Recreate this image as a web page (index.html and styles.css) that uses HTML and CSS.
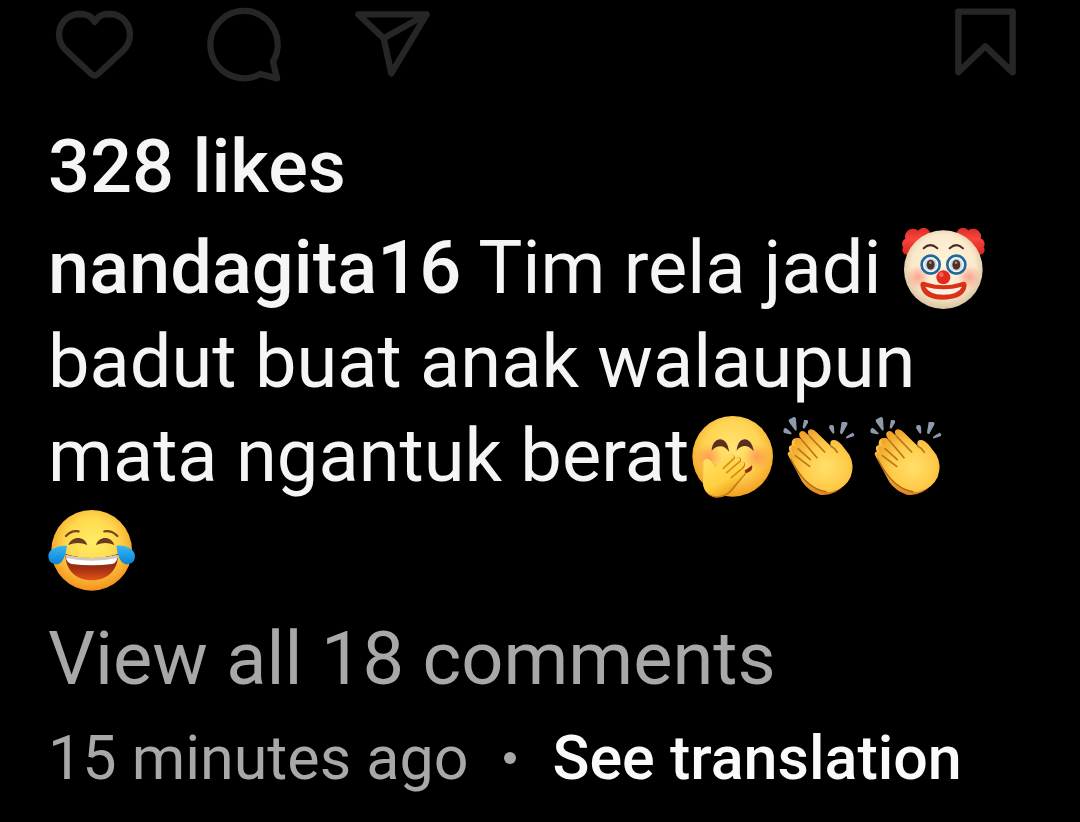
FILE: index.html
```html
<!DOCTYPE html>
<html lang="id">
<head>
<meta charset="utf-8">
<meta name="viewport" content="width=device-width, initial-scale=1">
<title>nandagita16</title>
<link rel="stylesheet" href="styles.css">
</head>
<body>
<article class="post">
  <div class="actions">
    <button class="action" type="button" aria-label="Like">
      <svg class="action-icon" viewBox="24 0 276 264"><path d="M164 66 C150 42 134 42 116 42 C84 43 57 70 57 104 C57 126 68 142 82 155 L154 222 Q164 231 174 222 L246 155 C260 142 270 126 270 104 C270 70 244 43 212 42 C194 42 178 42 164 66 Z"/></svg>
    </button>
    <button class="action" type="button" aria-label="Comment">
      <svg class="action-icon" viewBox="474 0 276 264"><path d="M661 222 A101 101 0 1 1 699 185 L711 235 Z"/></svg>
    </button>
    <button class="action" type="button" aria-label="Share">
      <svg class="action-icon" viewBox="924 0 276 264"><path d="M955 43 H1160 L1054 220 L1031 115 Z M1031 115 L1160 43"/></svg>
    </button>
    <button class="action action-save" type="button" aria-label="Save">
      <svg class="action-icon" viewBox="0 0 276 264"><path d="M55 35 H218 V217 L136 139 L55 217 Z"/></svg>
    </button>
  </div>

  <p class="likes">328 likes</p>

  <p class="caption"><a class="author" href="#">nandagita16</a> Tim rela jadi <svg class="emoji" role="img" aria-label="Clown face" viewBox="27 27 261 264">
      <defs>
        <radialGradient id="clown-skin" cx=".5" cy=".45" r=".55"><stop offset="0" stop-color="#fff5dc"/><stop offset=".72" stop-color="#fbe9cc"/><stop offset="1" stop-color="#d9c4a0"/></radialGradient>
        <linearGradient id="clown-hair" gradientUnits="userSpaceOnUse" x1="0" y1="35" x2="0" y2="118"><stop offset="0" stop-color="#d92a22"/><stop offset=".4" stop-color="#f8463c"/><stop offset="1" stop-color="#d9231d"/></linearGradient>
        <radialGradient id="clown-blush"><stop offset="0" stop-color="#ff8b78" stop-opacity=".75"/><stop offset="1" stop-color="#ff8b78" stop-opacity="0"/></radialGradient>
      </defs>
      <g fill="url(#clown-hair)"><circle cx="66" cy="62" r="24"/><circle cx="51" cy="84" r="18"/><circle cx="48" cy="102" r="14"/><circle cx="98" cy="54" r="19"/><circle cx="246" cy="62" r="24"/><circle cx="263" cy="84" r="18"/><circle cx="267" cy="102" r="14"/><circle cx="216" cy="54" r="19"/></g>
      <circle cx="157" cy="161" r="118" fill="url(#clown-skin)"/>
      <circle cx="80" cy="184" r="36" fill="url(#clown-blush)"/><circle cx="235" cy="184" r="36" fill="url(#clown-blush)"/>
      <path d="M98 97 Q118 78 139 97 M176 97 Q197 78 216 97" fill="none" stroke="#4c2b20" stroke-width="6" stroke-linecap="round"/>
      <g fill="#fff" stroke="#21699c" stroke-width="8"><circle cx="119" cy="146" r="27"/><circle cx="196" cy="146" r="27"/></g>
      <g fill="#c8dce7"><circle cx="119" cy="146" r="19"/><circle cx="196" cy="146" r="19"/></g>
      <g fill="#533025"><ellipse cx="119" cy="146" rx="12" ry="15"/><ellipse cx="196" cy="146" rx="12" ry="15"/></g>
      <g fill="#a98a80"><circle cx="118" cy="140" r="4"/><circle cx="195" cy="140" r="4"/></g>
      <path d="M88 206 Q89 192 108 200 Q157 215 207 200 Q227 192 227 208 Q223 250 157 251 Q92 250 88 206Z" fill="#d83319"/>
      <path d="M103 212 Q157 227 213 212 Q203 235 157 236 Q114 235 103 212Z" fill="#fff0e5"/>
      <circle cx="157" cy="184" r="21" fill="#e32a21"/><circle cx="151" cy="176" r="7" fill="#f5665b"/>
    </svg> badut buat anak walaupun mata ngantuk berat<svg class="emoji" role="img" aria-label="Face with hand over mouth" viewBox="24 21 261 264">
      <defs>
        <radialGradient id="giggle-skin" cx=".5" cy=".4" r=".62"><stop offset="0" stop-color="#ffe475"/><stop offset=".55" stop-color="#ffd452"/><stop offset="1" stop-color="#f09a1c"/></radialGradient>
        <radialGradient id="giggle-blush"><stop offset="0" stop-color="#ff7650" stop-opacity=".6"/><stop offset="1" stop-color="#ff7650" stop-opacity="0"/></radialGradient>
        <linearGradient id="giggle-hand" x2=".5" y2="1"><stop offset="0" stop-color="#ffe269"/><stop offset=".7" stop-color="#ffd03f"/><stop offset="1" stop-color="#eda51e"/></linearGradient>
      </defs>
      <circle cx="155" cy="151" r="121" fill="url(#giggle-skin)"/>
      <circle cx="83" cy="153" r="40" fill="url(#giggle-blush)"/><circle cx="228" cy="153" r="40" fill="url(#giggle-blush)"/>
      <path d="M92 134 C94 90 140 86 144 138 C132 116 109 115 92 134Z M167 134 C171 86 213 90 218 136 C202 116 181 115 167 134Z" fill="#59301f"/>
      <path d="M188 196 Q204 185 213 178 Q216 189 208 196 Q198 203 187 203Z" fill="#8c2b12"/>
      <path d="M69 178 C67 159 74 160 82 159 C91 160 99 171 105 184 L145 149 C155 142 165 148 162 158 C173 148 185 157 179 169 C190 162 199 176 187 187 L181 195 C195 191 200 202 189 211 L162 244 C150 264 129 276 105 275 C79 271 66 253 65 225Z" fill="#c67a18"/>
      <path d="M67 176 C66 159 75 158 81 158 C91 161 98 171 104 183 L142 149 C152 141 163 147 159 157 C171 149 181 157 176 167 C187 161 196 173 185 183 L178 192 C192 188 196 199 187 208 L157 241 C145 261 124 272 103 271 C77 267 64 249 66 220Z" fill="url(#giggle-hand)"/>
      <path d="M159 157 L127 187 M176 167 L137 200 M178 192 L151 215" fill="none" stroke="#d58d20" stroke-width="5" stroke-linecap="round"/>
    </svg><svg class="emoji" role="img" aria-label="Clapping hands" viewBox="0 21 261 264">
      <defs>
        <radialGradient id="clap-front" cx=".58" cy=".6" r=".62"><stop offset="0" stop-color="#ffe06b"/><stop offset=".55" stop-color="#ffcb4a"/><stop offset="1" stop-color="#f0a52b"/></radialGradient>
        <linearGradient id="clap-back" x2="1" y2="1"><stop offset="0" stop-color="#ffc94a"/><stop offset="1" stop-color="#d87818"/></linearGradient>
        <symbol id="clap" viewBox="0 21 261 264">
          <path d="M38 41 L53 33 Q59 32 60 38 L62 69 Q62 76 57 73 L39 48Z M84 42 L93 42 Q98 44 96 50 L86 67 Q81 69 80 63Z M24 68 Q28 64 33 68 L46 80 Q49 85 43 85 L27 82 Q19 79 24 68Z M197 48 L211 48 Q217 51 213 58 L199 83 Q193 87 192 79Z M161 58 L169 57 Q174 58 174 64 L175 80 Q174 85 169 81 L159 66Z M230 80 Q237 84 234 90 L214 97 Q207 98 212 91Z" fill="#8c9aac"/>
          <path d="M38 151 Q31 139 41 137 Q34 119 47 118 Q45 96 63 96 L147 160 L205 237 Q174 272 131 266 Q98 255 79 228Z" fill="url(#clap-back)"/>
          <path d="M42 158 Q35 146 45 142 Q52 140 58 149 Q40 132 48 122 Q57 115 66 128 Q49 107 58 98 Q67 91 77 101 Q64 85 73 77 Q82 72 91 82 L101 91 Q91 77 99 71 Q110 66 121 78 L164 120 Q160 103 171 102 Q183 100 197 116 L220 146 Q237 177 224 213 Q209 247 168 257 Q130 262 102 236 Q81 217 65 190Z" fill="url(#clap-front)"/>
          <path d="M58 149 L101 181 M66 128 L103 161 M77 101 L123 155 M101 91 L146 138 M164 120 Q177 126 184 139" fill="none" stroke="#b9761b" stroke-width="5" stroke-linecap="round"/>
          <path d="M43 158 Q57 184 67 198 Q84 224 108 240 Q126 253 151 257" fill="none" stroke="#a86213" stroke-width="4"/>
        </symbol>
      </defs>
      <use href="#clap" x="0" y="21" width="261" height="264"/>
    </svg><svg class="emoji" role="img" aria-label="Clapping hands" viewBox="0 21 261 264"><use href="#clap" x="0" y="21" width="261" height="264"/></svg><svg class="emoji" role="img" aria-label="Face with tears of joy" viewBox="21 18 261 264">
      <defs>
        <radialGradient id="joy-skin" cx=".5" cy=".4" r=".62"><stop offset="0" stop-color="#ffed66"/><stop offset=".5" stop-color="#ffd94d"/><stop offset="1" stop-color="#f28d1b"/></radialGradient>
        <linearGradient id="joy-mouth" x2="0" y2="1"><stop offset="0" stop-color="#6b200e"/><stop offset=".6" stop-color="#a93212"/><stop offset="1" stop-color="#df5419"/></linearGradient>
        <linearGradient id="joy-tear" x2="0" y2="1"><stop offset="0" stop-color="#36b9f5"/><stop offset="1" stop-color="#0b82d5"/></linearGradient>
      </defs>
      <circle cx="152" cy="148" r="121" fill="url(#joy-skin)"/>
      <path d="M75 105 Q91 87 113 91 M190 91 Q213 88 229 105" fill="none" stroke="#75471b" stroke-width="7" stroke-linecap="round"/>
      <path d="M82 132 C93 103 131 105 139 132 Q111 120 82 132Z M165 132 C174 104 211 105 220 132 Q194 120 165 132Z" fill="#693b1b"/>
      <path d="M73 159 Q152 183 231 159 C232 208 199 238 152 238 C106 238 73 208 73 159Z" fill="url(#joy-mouth)"/>
      <path d="M74 162 Q152 182 230 162 Q229 187 213 189 Q152 197 92 189 Q75 186 74 162Z" fill="#fff"/>
      <path d="M74 162 Q152 182 230 162 V171 Q152 187 75 171Z" fill="#d2c9bd"/>
      <path d="M78 134 Q42 133 27 151 Q18 163 26 181 Q36 194 54 188 Q72 180 78 134Z M226 134 Q261 132 277 151 Q286 164 278 181 Q268 194 250 188 Q231 180 226 134Z" fill="url(#joy-tear)"/>
    </svg></p>

  <a class="comments" href="#">View all 18 comments</a>

  <div class="meta">
    <time>15 minutes ago</time>
    <span class="dot" aria-hidden="true"></span>
    <button class="translate" type="button">See translation</button>
  </div>
</article>
</body>
</html>
```

FILE: styles.css
```css
* {
  box-sizing: border-box;
}

body {
  margin: 0;
  background: #000;
  color: #f5f5f5;
  font-family: Roboto, "Noto Sans", sans-serif;
  font-size: 74px;
  line-height: 94px;
}

button {
  margin: 0;
  padding: 0;
  border: 0;
  background: none;
  color: inherit;
  font: inherit;
  cursor: pointer;
}

a {
  color: inherit;
  text-decoration: none;
}

p {
  margin: 0;
}

.post {
  padding: 0 48px 16px;
}

.actions {
  display: flex;
  gap: 58px;
  margin-bottom: 32px;
}

.action {
  width: 92px;
  height: 88px;
}

.action-save {
  margin-left: auto;
}

.action-icon {
  display: block;
  width: 100%;
  height: 100%;
  fill: none;
  stroke: #262626;
  stroke-width: 19;
  stroke-linejoin: round;
  stroke-linecap: round;
}

.likes {
  margin-bottom: 7px;
  font-weight: 500;
}

.author {
  font-weight: 500;
}

.emoji {
  width: 87px;
  height: 88px;
  vertical-align: -20px;
}

.comments {
  display: block;
  margin-top: 15px;
  color: #a8a8a8;
}

.meta {
  display: flex;
  align-items: center;
  margin-top: 12px;
  font-size: 61px;
  line-height: 80px;
  color: #a8a8a8;
}

.dot {
  width: 12px;
  height: 12px;
  margin: 0 36px;
  border-radius: 50%;
  background: #a8a8a8;
}

.translate {
  color: #fafafa;
  font-weight: 500;
}
```
